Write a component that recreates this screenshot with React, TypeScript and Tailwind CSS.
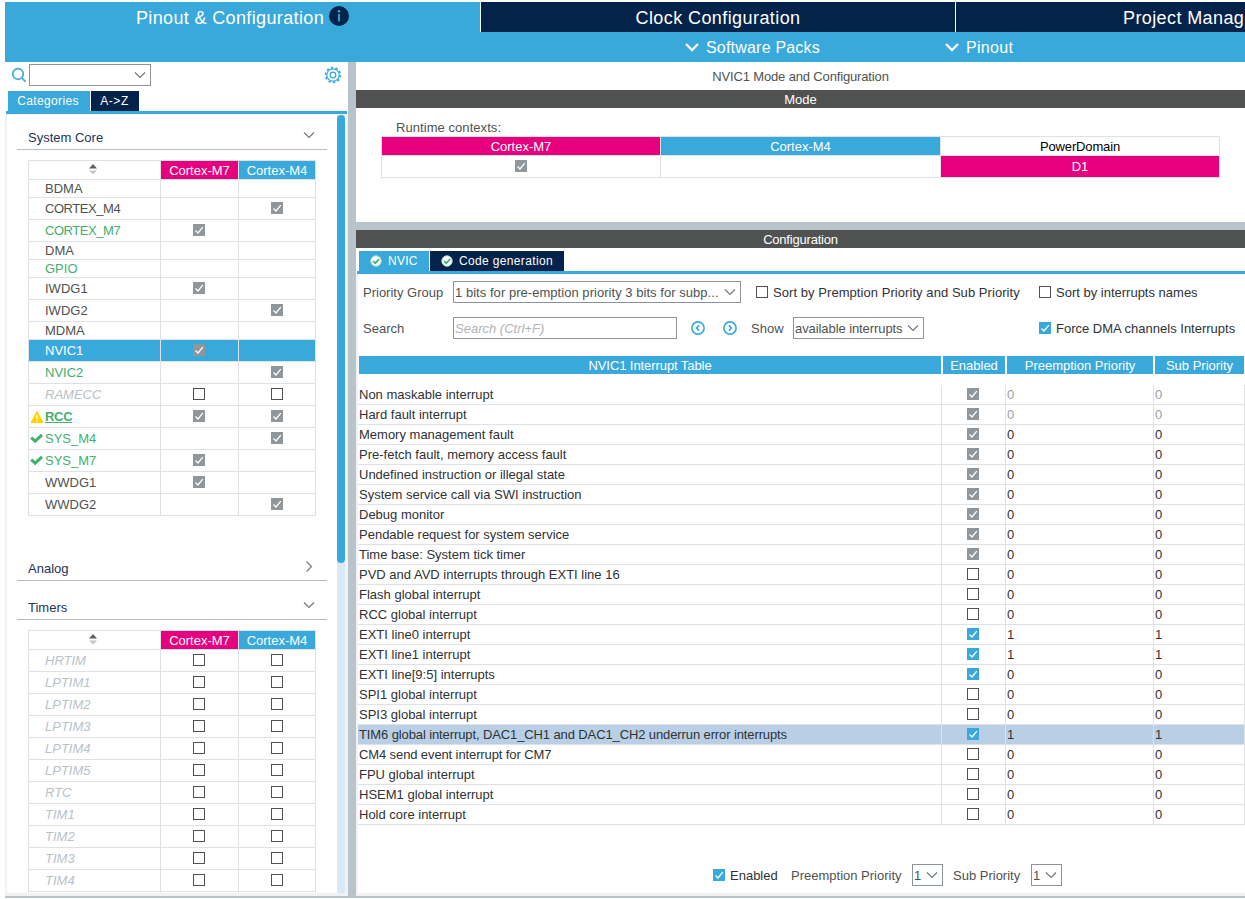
import type { ReactNode } from "react";

type State = "on" | "off" | "locked" | "";

type Peripheral = {
  name: string;
  m7: State;
  m4: State;
  tone?: "green" | "muted" | "selected" | "warning";
  icon?: "check" | "warning";
};

const systemCore: Peripheral[] = [
  { name: "BDMA", m7: "", m4: "" },
  { name: "CORTEX_M4", m7: "", m4: "locked" },
  { name: "CORTEX_M7", m7: "locked", m4: "", tone: "green" },
  { name: "DMA", m7: "", m4: "" },
  { name: "GPIO", m7: "", m4: "", tone: "green" },
  { name: "IWDG1", m7: "locked", m4: "" },
  { name: "IWDG2", m7: "", m4: "locked" },
  { name: "MDMA", m7: "", m4: "" },
  { name: "NVIC1", m7: "locked", m4: "", tone: "selected" },
  { name: "NVIC2", m7: "", m4: "locked", tone: "green" },
  { name: "RAMECC", m7: "off", m4: "off", tone: "muted" },
  { name: "RCC", m7: "locked", m4: "locked", tone: "warning", icon: "warning" },
  { name: "SYS_M4", m7: "", m4: "locked", tone: "green", icon: "check" },
  { name: "SYS_M7", m7: "locked", m4: "", tone: "green", icon: "check" },
  { name: "WWDG1", m7: "locked", m4: "" },
  { name: "WWDG2", m7: "", m4: "locked" },
];

const timers: Peripheral[] = [
  "HRTIM", "LPTIM1", "LPTIM2", "LPTIM3", "LPTIM4", "LPTIM5", "RTC", "TIM1", "TIM2", "TIM3", "TIM4", "",
].map((name) => ({ name, m7: "off", m4: "off", tone: "muted" }));

const interrupts: { name: string; state: State; pre: number; sub: number; fixed?: boolean; selected?: boolean }[] = [
  { name: "Non maskable interrupt", state: "locked", pre: 0, sub: 0, fixed: true },
  { name: "Hard fault interrupt", state: "locked", pre: 0, sub: 0, fixed: true },
  { name: "Memory management fault", state: "locked", pre: 0, sub: 0 },
  { name: "Pre-fetch fault, memory access fault", state: "locked", pre: 0, sub: 0 },
  { name: "Undefined instruction or illegal state", state: "locked", pre: 0, sub: 0 },
  { name: "System service call via SWI instruction", state: "locked", pre: 0, sub: 0 },
  { name: "Debug monitor", state: "locked", pre: 0, sub: 0 },
  { name: "Pendable request for system service", state: "locked", pre: 0, sub: 0 },
  { name: "Time base: System tick timer", state: "locked", pre: 0, sub: 0 },
  { name: "PVD and AVD interrupts through EXTI line 16", state: "off", pre: 0, sub: 0 },
  { name: "Flash global interrupt", state: "off", pre: 0, sub: 0 },
  { name: "RCC global interrupt", state: "off", pre: 0, sub: 0 },
  { name: "EXTI line0 interrupt", state: "on", pre: 1, sub: 1 },
  { name: "EXTI line1 interrupt", state: "on", pre: 1, sub: 1 },
  { name: "EXTI line[9:5] interrupts", state: "on", pre: 0, sub: 0 },
  { name: "SPI1 global interrupt", state: "off", pre: 0, sub: 0 },
  { name: "SPI3 global interrupt", state: "off", pre: 0, sub: 0 },
  { name: "TIM6 global interrupt, DAC1_CH1 and DAC1_CH2 underrun error interrupts", state: "on", pre: 1, sub: 1, selected: true },
  { name: "CM4 send event interrupt for CM7", state: "off", pre: 0, sub: 0 },
  { name: "FPU global interrupt", state: "off", pre: 0, sub: 0 },
  { name: "HSEM1 global interrupt", state: "off", pre: 0, sub: 0 },
  { name: "Hold core interrupt", state: "off", pre: 0, sub: 0 },
];

const tones = {
  green: "text-[#43b06e]",
  muted: "text-[#b8c2c8] italic",
  selected: "text-white",
  warning: "text-[#43b06e] font-bold underline tracking-[-0.3px]",
};

function Checkbox({ state }: { state: State }) {
  if (!state) return null;
  if (state === "off") return <div className="size-3 shrink-0 border border-[#505251] bg-white" />;
  return (
    <div className={`size-3 shrink-0 ${state === "on" ? "bg-[#39a9dc]" : "bg-[#8f979d]"}`}>
      <svg className="block size-3" viewBox="0 0 12 12" fill="none" stroke="#fff" strokeWidth={1.3}>
        <path d="M2.5 6.5 5 9l4.8-5.8" />
      </svg>
    </div>
  );
}

function Chevron({ right = false }: { right?: boolean }) {
  return (
    <svg className="block size-3 shrink-0" viewBox="0 0 12 12" fill="none" stroke="#74797d" strokeWidth={1.2}>
      <path d={right ? "M3.5 1.5 8.5 6.5l-5 5" : "M1 3.5 6 8.5l5-5"} />
    </svg>
  );
}

function Select({ className, children }: { className: string; children?: ReactNode }) {
  return (
    <div className={`flex h-[22px] shrink-0 items-center justify-between border border-[#8c949a] bg-white pl-px pr-1 ${className}`}>
      <span className="whitespace-nowrap">{children}</span>
      <Chevron />
    </div>
  );
}

function SectionTitle({ title, open, className }: { title: string; open: boolean; className: string }) {
  return (
    <div className={`flex h-[27px] items-center justify-between border-b border-[#b3bfc5] pl-[11px] pr-3 pt-[3px] text-[#24335c] ${className}`}>
      <span>{title}</span>
      <div className="-mt-[5px]"><Chevron right={!open} /></div>
    </div>
  );
}

function RowIcon({ icon }: { icon?: Peripheral["icon"] }) {
  if (icon === "warning") {
    return (
      <svg className="h-3 w-[14px]" viewBox="0 0 14 12">
        <path d="M7 0.5 13 11.5H1Z" fill="#ffd300" stroke="#ffd300" strokeLinejoin="round" />
        <path d="M7 4v3.6M7 9v1.3" stroke="#fff" strokeWidth={1.3} />
      </svg>
    );
  }
  if (icon === "check") {
    return (
      <svg className="h-3 w-[14px]" viewBox="0 0 14 12" fill="none" stroke="#43b06e" strokeWidth={3}>
        <path d="M1.2 4.6 5.2 8.2 12 1.8" />
      </svg>
    );
  }
  return null;
}

function PeripheralTable({ rows }: { rows: Peripheral[] }) {
  const grid = "grid grid-cols-[132px_78px_77px]";
  return (
    <div className="ml-[11px] w-[288px] border-l border-t border-[#dfe2e5]">
      <div className={`${grid} h-[19px] grid-rows-[19px]`}>
        <div className="flex justify-center border-b border-r border-[#dfe2e5] pr-[3px] pt-[3px]">
          <svg className="h-[11px] w-2" viewBox="0 0 8 11">
            <path d="M0 4.5h8L4 0Z" fill="#5c5f61" />
            <path d="M0 6.5h8l-4 4Z" fill="#c3c6c9" />
          </svg>
        </div>
        <div className="border-b border-r border-[#dfe2e5] bg-[#e6007e] text-center leading-[19px] text-white">Cortex-M7</div>
        <div className="border-b border-r border-[#dfe2e5] bg-[#39a9dc] text-center leading-[19px] text-white">Cortex-M4</div>
      </div>
      {rows.map((row) => (
        <div key={row.name} className={`${grid} ${row.m7 || row.m4 ? "h-[22px]" : "h-[18px]"} ${row.tone === "selected" ? "bg-[#39a9dc]" : ""}`}>
          <div className="flex items-center border-b border-r border-[#dfe2e5] pl-px">
            <span className="w-[15px] shrink-0"><RowIcon icon={row.icon} /></span>
            <span className={`${row.name.startsWith("CORTEX") ? "tracking-[-0.45px]" : ""} ${row.tone ? tones[row.tone] : "text-[#505251]"}`}>{row.name}</span>
          </div>
          <div className="flex items-center justify-center border-b border-r border-[#dfe2e5] pb-px pr-px"><Checkbox state={row.m7} /></div>
          <div className="flex items-center justify-center border-b border-r border-[#dfe2e5] pb-px"><Checkbox state={row.m4} /></div>
        </div>
      ))}
    </div>
  );
}

function MenuChevron() {
  return (
    <svg className="h-3 w-4" viewBox="0 0 16 12" fill="none" stroke="#fff" strokeWidth={2.4}>
      <path d="M2 3 8 9l6-6" />
    </svg>
  );
}

function Header() {
  return (
    <header className="ml-[5px] mt-0.5 flex h-[60px] shrink-0 bg-[#39a9dc] text-white">
      <div className="flex h-[30px] w-[475px] shrink-0 items-center justify-center gap-[5px] text-lg">
        <span className="pt-0.5 tracking-[0.36px]">Pinout &amp; Configuration</span>
        <svg className="-mt-0.5 size-5" viewBox="0 0 20 20">
          <circle cx="10" cy="10" r="10" fill="#03234b" />
          <circle cx="10" cy="5.2" r="1.2" fill="#39a9dc" />
          <path d="M10 8v7.5" stroke="#39a9dc" strokeWidth={1.8} />
        </svg>
      </div>
      <div className="flex min-w-0 flex-1 flex-col">
        <div className="flex h-[30px] shrink-0 text-lg leading-8">
          <div className="w-[475px] shrink-0 border-l border-white bg-[#03234b] text-center tracking-[0.42px]">Clock Configuration</div>
          <div className="min-w-0 flex-1 overflow-hidden whitespace-nowrap border-l border-white bg-[#03234b] pl-[167px] tracking-[0.4px]">Project Manager</div>
        </div>
        <div className="flex h-[30px] items-center pl-[204px] text-base">
          <div className="flex w-[260px] items-center gap-1.5"><MenuChevron /><span className="pt-0.5 tracking-[0.2px]">Software Packs</span></div>
          <div className="flex items-center gap-1.5"><MenuChevron /><span className="pt-0.5 tracking-[0.3px]">Pinout</span></div>
        </div>
      </div>
    </header>
  );
}

function Gear() {
  return (
    <svg className="size-[18px]" viewBox="0 0 18 18" fill="none" stroke="#39a9dc">
      <circle cx="9" cy="9" r="7.4" strokeWidth={1.8} strokeDasharray="2.3 2.35" />
      <circle cx="9" cy="9" r="6.2" strokeWidth={1.2} />
      <circle cx="9" cy="9" r="2.8" strokeWidth={1.3} />
    </svg>
  );
}

function Sidebar() {
  return (
    <aside className="flex w-[343px] shrink-0 flex-col">
      <div className="flex h-[29px] shrink-0 items-center pl-1.5 pr-1.5">
        <svg className="mr-0.5 -mt-[3px] size-4" viewBox="0 0 16 16" fill="none" stroke="#39a9dc" strokeWidth={1.7}>
          <circle cx="7" cy="7" r="5.3" />
          <path d="m11 11 3.5 3.7" />
        </svg>
        <div className="-mt-[3px]"><Select className="w-[122px]" /></div>
        <div className="-mt-[3px] ml-auto"><Gear /></div>
      </div>
      <div className="flex h-5 shrink-0 gap-px pl-[3px] text-xs leading-5 text-white">
        <div className="w-[82px] pr-0.5 bg-[#39a9dc] text-center tracking-[0.35px]">Categories</div>
        <div className="w-12 bg-[#03234b] pr-px text-center tracking-[0.6px]">A-&gt;Z</div>
      </div>
      <div className="ml-px mr-px h-[3px] shrink-0 bg-[#39a9dc]" />
      <div className="flex min-h-0 flex-1 border-b-[3px] border-l-2 border-r-[3px] border-t border-[#f0f2f4]">
        <div className="h-full min-w-0 flex-1 overflow-hidden pl-2.5 pr-2.5">
          <SectionTitle title="System Core" open className="mb-2.5 mt-2" />
          <PeripheralTable rows={systemCore} />
          <SectionTitle title="Analog" open={false} className="mt-[38px]" />
          <SectionTitle title="Timers" open className="mb-2.5 mt-3" />
          <PeripheralTable rows={timers} />
        </div>
        <div className="w-2 shrink-0 bg-[#d9e9f6]">
          <div className="h-[448px] rounded bg-[#39a9dc]" />
        </div>
      </div>
    </aside>
  );
}

function ModePanel() {
  return (
    <section className="flex h-[160px] shrink-0 flex-col">
      <div className="h-7 shrink-0 text-center leading-[29px] tracking-[-0.15px] text-[#505251]">NVIC1 Mode and Configuration</div>
      <div className="h-[18px] shrink-0 bg-[#505251] text-center leading-[19px] text-white">Mode</div>
      <div className="pl-[25px] pt-[11px]">
        <div className="h-[17px] pl-[15px] leading-[18px] tracking-[0.06px] text-[#505251]">Runtime contexts:</div>
        <div className="grid w-[839px] grid-cols-[279px_280px_279px] grid-rows-[19px_22px] border-l border-t border-[#dfe2e5] text-center leading-[19px] text-white [&>div]:border-b [&>div]:border-r [&>div]:border-[#dfe2e5]">
          <div className="bg-[#e6007e]">Cortex-M7</div>
          <div className="bg-[#39a9dc]">Cortex-M4</div>
          <div className="tracking-[-0.15px] text-black">PowerDomain</div>
          <div className="flex items-center justify-center pb-px"><Checkbox state="locked" /></div>
          <div />
          <div className="bg-[#e6007e] leading-[22px]">D1</div>
        </div>
      </div>
    </section>
  );
}

function CheckBadge() {
  return (
    <svg className="size-3" viewBox="0 0 12 12">
      <circle cx="6" cy="6" r="5.2" fill="#fff" stroke="#b9e0c8" />
      <path d="M3 6l2.2 2.2L9.2 4" fill="none" stroke="#3cb46b" strokeWidth={1.7} />
    </svg>
  );
}

function Nav({ next = false }: { next?: boolean }) {
  return (
    <svg className="size-[14px] shrink-0" viewBox="0 0 14 14" fill="none" stroke="#39a9dc">
      <circle cx="7" cy="7" r="6.1" strokeWidth={1.6} />
      <path d={next ? "M5.8 4.3 8.5 7 5.8 9.7" : "M8.2 4.3 5.5 7l2.7 2.7"} strokeWidth={1.7} />
    </svg>
  );
}

function InterruptTable() {
  const header = "bg-[#39a9dc] text-center text-white leading-[19px]";
  return (
    <div>
      <div className="grid h-[18px] grid-cols-[582px_62px_146px_89px] grid-rows-[18px] gap-0.5 pl-px">
        <div className={`${header} tracking-[-0.08px]`}>NVIC1 Interrupt Table</div>
        <div className={header}>Enabled</div>
        <div className={header}>Preemption Priority</div>
        <div className={header}>Sub Priority</div>
      </div>
      <div className="mt-[11px]">
        {interrupts.map((row) => (
          <div
            key={row.name}
            className={`grid h-5 w-[887px] grid-cols-[584px_64px_148px_91px] grid-rows-[20px] leading-5 [&>div]:border-b [&>div]:border-r [&>div]:border-[#dfe2e5] ${row.selected ? "bg-[#b8cfe6]" : ""}`}
          >
            <div className={`whitespace-nowrap pl-px text-[#303234] ${/^(TIM6|CM4)/.test(row.name) ? "tracking-[-0.11px]" : ""}`}>{row.name}</div>
            <div className="flex items-center justify-center pb-px pr-px"><Checkbox state={row.state} /></div>
            <div className={`pl-px ${row.fixed ? "text-[#9aa0a5]" : "text-[#303234]"}`}>{row.pre}</div>
            <div className={`pl-px ${row.fixed ? "text-[#9aa0a5]" : "text-[#303234]"}`}>{row.sub}</div>
          </div>
        ))}
      </div>
    </div>
  );
}

function ConfigurationPanel() {
  return (
    <section className="flex min-h-0 flex-1 flex-col text-[#505251]">
      <div className="h-[18px] shrink-0 bg-[#505251] text-center leading-[19px] tracking-[-0.2px] text-white">Configuration</div>
      <div className="mt-[3px] flex h-5 shrink-0 gap-px pl-[3px] text-xs leading-5 text-white">
        <div className="flex w-[70px] items-center gap-1.5 bg-[#39a9dc] pl-[11px]"><CheckBadge /><span className="tracking-[0.25px]">NVIC</span></div>
        <div className="flex w-[134px] items-center gap-1.5 bg-[#03234b] pl-[11px]"><CheckBadge /><span className="tracking-[0.35px]">Code generation</span></div>
      </div>
      <div className="ml-px h-[3px] shrink-0 bg-[#39a9dc]" />
      <div className="flex min-h-0 flex-1 flex-col border-b-[3px] border-l-2 border-t border-[#f0f2f4]">
        <div className="mt-1.5 flex h-[22px] items-center whitespace-nowrap pl-[5px] [&_span]:pt-0.5">
          <span className="w-[90px]">Priority Group</span>
          <Select className="w-[288px] tracking-[0.04px]">1 bits for pre-emption priority 3 bits for subp...</Select>
          <div className="ml-[15px] flex w-[283px] items-center gap-[5px] text-[#303234]"><Checkbox state="off" /><span className="tracking-[0.06px]">Sort by Premption Priority and Sub Priority</span></div>
          <div className="flex items-center gap-[5px] text-[#303234]"><Checkbox state="off" /><span>Sort by interrupts names</span></div>
        </div>
        <div className="mt-3.5 flex h-[22px] items-center whitespace-nowrap pl-[5px] [&_span]:pt-0.5">
          <span className="w-[90px]">Search</span>
          <div className="h-[22px] w-[224px] border border-[#8c949a] pl-px italic leading-[21px] text-[#b0b3b5]">Search (Ctrl+F)</div>
          <div className="ml-3.5 mr-3.5 flex gap-[18px]"><Nav /><Nav next /></div>
          <span className="w-[42px]">Show</span>
          <Select className="w-[131px] tracking-[-0.08px]">available interrupts</Select>
          <div className="ml-[115px] flex items-center gap-[5px] text-[#303234]"><Checkbox state="on" /><span>Force DMA channels Interrupts</span></div>
        </div>
        <div className="mt-[17px]"><InterruptTable /></div>
        <div className="mt-[39px] flex h-[22px] items-center whitespace-nowrap pl-[355px] [&_span]:pt-0.5">
          <div className="flex w-[78px] items-center gap-[5px] text-[#303234]"><Checkbox state="on" /><span>Enabled</span></div>
          <span className="w-[121px]">Preemption Priority</span>
          <Select className="w-[31px]">1</Select>
          <span className="ml-2.5 w-[78px]">Sub Priority</span>
          <Select className="w-[31px]">1</Select>
        </div>
      </div>
    </section>
  );
}

export default function App() {
  return (
    <div className="flex h-[899px] w-[1245px] flex-col overflow-hidden bg-white font-['Liberation_Sans',Arial,sans-serif] text-[13px] leading-4">
      <Header />
      <div className="mb-px ml-[5px] flex min-h-0 flex-1 border-b-2 border-[#b8c4ca]">
        <Sidebar />
        <div className="w-2 shrink-0 bg-[#b8c4ca]" />
        <main className="flex min-w-0 flex-1 flex-col">
          <ModePanel />
          <div className="h-2 shrink-0 bg-[#b8c4ca]" />
          <ConfigurationPanel />
        </main>
      </div>
    </div>
  );
}
